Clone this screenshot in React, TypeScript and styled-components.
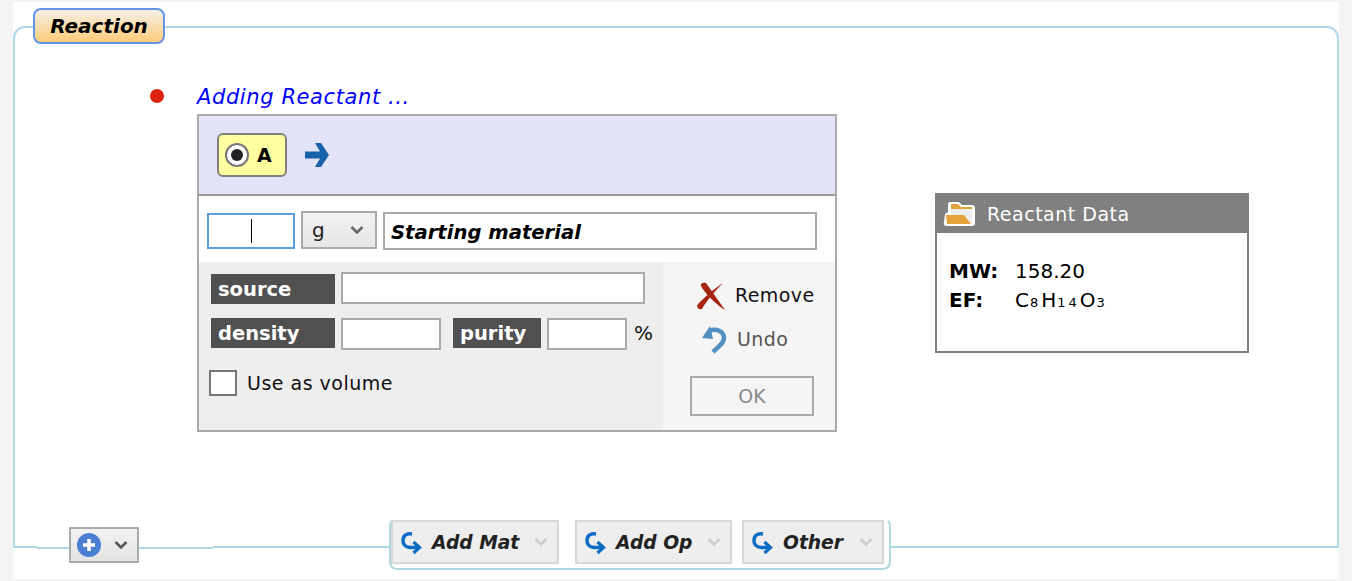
import React from 'react';
import styled, { createGlobalStyle } from 'styled-components';

const GlobalStyle = createGlobalStyle`
  html, body {
    margin: 0;
    height: 100%;
    overflow: hidden;
    background: #f4f4f4;
    font-family: "DejaVu Sans", Verdana, sans-serif;
  }
`;

const line = '#add8e6';

const Page = styled.div`
  box-sizing: border-box;
  width: 1326px;
  height: 577px;
  margin: 2px 0 0 13px;
  padding-top: 24px;
  background: #fff;
`;

const Frame = styled.section`
  position: relative;
  box-sizing: border-box;
  height: 522px;
  display: flex;
  flex-direction: column;
  border: 2px solid ${line};
  border-radius: 12px 12px 0 0;
`;

const Legend = styled.h2`
  box-sizing: border-box;
  width: 132px;
  height: 36px;
  margin: -20px 0 0 18px;
  display: flex;
  align-items: center;
  justify-content: center;
  border: 2px solid #6495ed;
  border-radius: 8px;
  background: linear-gradient(#f5f0e6, #ffcc7a);
  font-size: 20px;
  font-weight: bold;
  font-style: italic;
  color: #000;
`;

const Work = styled.div`
  display: flex;
  align-items: flex-start;
  margin-top: 40px;
`;

const Dot = styled.span`
  flex: none;
  width: 14px;
  height: 14px;
  margin: 5px 0 0 135px;
  border-radius: 50%;
  background: #dd2211;
`;

const Step = styled.div`
  margin-left: 33px;
`;

const StepTitle = styled.div`
  height: 30px;
  line-height: 26px;
  font-size: 21px;
  font-style: italic;
  letter-spacing: 0.6px;
  color: #0000ff;
`;

const Panel = styled.div`
  box-sizing: border-box;
  width: 640px;
  height: 318px;
  display: flex;
  flex-direction: column;
  border: 2px solid #aaa;
`;

const PanelHead = styled.div`
  box-sizing: border-box;
  height: 80px;
  display: flex;
  align-items: center;
  padding: 0 0 0 18px;
  background: #e4e4f8;
  border-bottom: 2px solid #999;
`;

const Choice = styled.div`
  box-sizing: border-box;
  width: 70px;
  height: 44px;
  display: flex;
  align-items: center;
  gap: 8px;
  padding-left: 6px;
  background: #ffffa0;
  border: 2px solid #808080;
  border-radius: 6px;
  font-size: 19px;
  font-weight: bold;
  color: #000;
`;

const Radio = styled.span`
  box-sizing: border-box;
  width: 24px;
  height: 24px;
  display: flex;
  align-items: center;
  justify-content: center;
  border: 2px solid #777;
  border-radius: 50%;
  background: #fff;
  &::after {
    content: '';
    width: 12px;
    height: 12px;
    border-radius: 50%;
    background: #222;
  }
`;

const NextArrow = styled.svg`
  width: 26px;
  height: 26px;
  margin-left: 17px;
`;

const AmountRow = styled.div`
  height: 66px;
  display: flex;
  align-items: flex-start;
  padding: 17px 0 0 8px;
  box-sizing: border-box;
  background: #fff;
`;

const Field = styled.div<{ $w: number; $h?: number; $color?: string; $mt?: number; $ml?: number }>`
  box-sizing: border-box;
  flex: none;
  width: ${p => p.$w}px;
  height: ${p => p.$h ?? 32}px;
  margin-top: ${p => p.$mt ?? 0}px;
  margin-left: ${p => p.$ml ?? 0}px;
  border: 2px solid ${p => p.$color ?? '#aaa'};
  background: #fff;
`;

const AmountField = styled(Field)`
  display: flex;
  align-items: center;
  justify-content: center;
`;

const Caret = styled.span`
  width: 1px;
  height: 24px;
  background: #000;
`;

const Select = styled.div`
  box-sizing: border-box;
  width: 76px;
  height: 38px;
  margin: -2px 0 0 6px;
  display: flex;
  align-items: center;
  justify-content: space-between;
  padding: 0 11px 0 9px;
  border: 2px solid #aaa;
  background: linear-gradient(#f2f2f2, #e6e6e6);
  font-size: 20px;
  color: #222;
`;

const NameField = styled(Field)`
  display: flex;
  align-items: center;
  padding: 3px 0 0 6px;
  font-size: 19.6px;
  font-weight: bold;
  font-style: italic;
  color: #000;
`;

const Lower = styled.div`
  flex: 1;
  display: flex;
`;

const Details = styled.div`
  box-sizing: border-box;
  width: 464px;
  padding: 10px 0 0 12px;
  background: #eee;
`;

const DetailRow = styled.div<{ $mt?: number }>`
  display: flex;
  align-items: flex-start;
  margin-top: ${p => p.$mt ?? 0}px;
`;

const Tag = styled.div<{ $w: number; $ml?: number; $mt?: number }>`
  box-sizing: border-box;
  flex: none;
  width: ${p => p.$w}px;
  height: 30px;
  margin-top: ${p => p.$mt ?? 0}px;
  margin-left: ${p => p.$ml ?? 0}px;
  padding-left: 7px;
  line-height: 31px;
  background: #505050;
  color: #fff;
  font-size: 19.5px;
  font-weight: bold;
`;

const Percent = styled.span`
  margin-left: 7px;
  line-height: 30px;
  font-size: 20px;
  color: #111;
`;

const VolumeRow = styled.label`
  display: flex;
  align-items: center;
  gap: 10px;
  margin: 20px 0 0 -2px;
  font-size: 19px;
  letter-spacing: 0.5px;
  color: #111;
`;

const Box = styled.span`
  box-sizing: border-box;
  width: 28px;
  height: 26px;
  border: 2px solid #777;
  background: #fff;
`;

const Actions = styled.div`
  flex: 1;
  display: flex;
  flex-direction: column;
  align-items: flex-start;
  box-sizing: border-box;
  padding: 18px 0 0 27px;
  background: #f5f5f5;
`;

const Action = styled.div<{ $muted?: boolean; $mt?: number }>`
  display: flex;
  align-items: center;
  height: 30px;
  margin-top: ${p => p.$mt ?? 0}px;
  font-size: 19px;
  letter-spacing: 0.4px;
  color: ${p => (p.$muted ? '#555' : '#111')};
`;

const ActionIcon = styled.svg<{ $ml: number; $w: number }>`
  flex: none;
  width: ${p => p.$w}px;
  height: 30px;
  margin: 0 10px 0 ${p => p.$ml}px;
`;

const OkButton = styled.div`
  box-sizing: border-box;
  width: 124px;
  height: 40px;
  margin-top: 22px;
  display: flex;
  align-items: center;
  justify-content: center;
  border: 2px solid #aaa;
  font-size: 19px;
  color: #888;
`;

const DataBox = styled.aside`
  box-sizing: border-box;
  width: 314px;
  height: 160px;
  margin: 109px 0 0 98px;
  border: 2px solid #808080;
  background: #fff;
`;

const DataHead = styled.div`
  height: 38px;
  display: flex;
  align-items: center;
  padding-left: 6px;
  background: #808080;
  color: #fff;
  font-size: 19px;
  letter-spacing: 0.5px;
`;

const DataIcon = styled.svg`
  width: 33px;
  height: 26px;
  margin-right: 11px;
`;

const DataGrid = styled.div`
  display: grid;
  grid-template-columns: 66px 1fr;
  grid-auto-rows: 29px;
  align-items: center;
  padding: 23px 0 0 12px;
  font-size: 20px;
  color: #000;
`;

const DataKey = styled.span`
  font-weight: bold;
`;

const Sub = styled.span`
  font-size: 13px;
  letter-spacing: 3px;
  margin-left: 1px;
`;

const Seam = styled.div`
  position: absolute;
  left: 22px;
  bottom: -3px;
  width: 176px;
  height: 2px;
  border-top: 1px solid #fff;
  background: ${line};
`;

const Footer = styled.div`
  position: relative;
  z-index: 1;
  margin-top: auto;
  margin-bottom: -24px;
  height: 52px;
  display: flex;
  align-items: flex-start;
`;

const AddButton = styled.div`
  box-sizing: border-box;
  width: 70px;
  height: 36px;
  margin: 9px 0 0 54px;
  display: flex;
  align-items: center;
  padding: 0 9px 0 6px;
  border: 2px solid #aaa;
  background: linear-gradient(#f2f2f2, #e4e4e4);
`;

const Toolbar = styled.div`
  box-sizing: border-box;
  height: 52px;
  margin-left: 250px;
  display: flex;
  align-items: flex-start;
  padding-right: 5px;
  background: #fff;
  border: 2px solid ${line};
  border-top-color: #fff;
  border-radius: 8px;
`;

const MenuButton = styled.div<{ $w: number; $ml?: number }>`
  box-sizing: border-box;
  width: ${p => p.$w}px;
  height: 44px;
  margin-left: ${p => p.$ml ?? 0}px;
  display: flex;
  align-items: center;
  padding: 0 9px 0 7px;
  border: 2px solid #d8d8d8;
  background: #eee;
  font-size: 18.7px;
  font-weight: bold;
  font-style: italic;
  color: #222;
`;

const MenuIcon = styled.svg`
  flex: none;
  width: 24px;
  height: 26px;
  margin-right: 8px;
`;

const ChevronIcon = styled.svg`
  flex: none;
  width: 14px;
  height: 14px;
  margin-left: auto;
`;

const Chevron = ({ color }: { color: string }) => (
  <ChevronIcon viewBox="0 0 14 14">
    <path d="M1.500 4 7 9.500 12.500 4" fill="none" stroke={color} strokeWidth="2.600" />
  </ChevronIcon>
);

const CurveArrow = () => (
  <MenuIcon viewBox="0 0 24 26">
    <path d="M12 5C6 4 3 7 3 11.500S6 18 10 18.500h8" fill="none" stroke="#0b6cc4" strokeWidth="3.400" />
    <path d="M13.500 13l6 5.500-6 5.500" fill="none" stroke="#0b6cc4" strokeWidth="3.200" />
  </MenuIcon>
);

const menus = [
  { label: 'Add Mat', w: 168, ml: 0 },
  { label: 'Add Op', w: 157, ml: 16 },
  { label: 'Other', w: 142, ml: 10 },
];

const App: React.FC = () => (
  <Page>
    <GlobalStyle />
    <Frame>
      <Legend>Reaction</Legend>
      <Work>
        <Dot />
        <Step>
          <StepTitle>Adding Reactant ...</StepTitle>
          <Panel>
            <PanelHead>
              <Choice>
                <Radio />
                A
              </Choice>
              <NextArrow viewBox="0 0 26 26">
                <path d="M11 1h6l8 12-8 12h-6l5-8.500H1V9.500h15z" fill="#1762a8" />
              </NextArrow>
            </PanelHead>
            <AmountRow>
              <AmountField $w={88} $h={36} $color="#5a9fe0">
                <Caret />
              </AmountField>
              <Select>
                g
                <Chevron color="#666" />
              </Select>
              <NameField $w={434} $h={38} $ml={6} $mt={-1}>Starting material</NameField>
            </AmountRow>
            <Lower>
              <Details>
                <DetailRow>
                  <Tag $w={124} $mt={2}>source</Tag>
                  <Field $w={304} $ml={6} />
                </DetailRow>
                <DetailRow $mt={14}>
                  <Tag $w={124}>density</Tag>
                  <Field $w={100} $ml={6} />
                  <Tag $w={88} $ml={12}>purity</Tag>
                  <Field $w={80} $ml={6} />
                  <Percent>%</Percent>
                </DetailRow>
                <VolumeRow>
                  <Box />
                  Use as volume
                </VolumeRow>
              </Details>
              <Actions>
                <Action>
                  <ActionIcon $ml={7} $w={28} viewBox="0 0 28 30">
                    <path d="M26 3C18 8 8 17 1 24c-2 3 0 6 4 5 5-9 14-19 21-26z" fill="#a52510" />
                    <path d="M4 6c-1-2 2-4 5-3 5 7 12 17 19 27C20 25 9 15 4 6z" fill="#a52510" />
                  </ActionIcon>
                  Remove
                </Action>
                <Action $muted $mt={14}>
                  <ActionIcon $ml={11} $w={26} viewBox="0 0 26 30">
                    <path d="M8 7c7-3 15 0 15 7 0 5-5 8-11 14" fill="none" stroke="#4f8fc0" strokeWidth="4.500" />
                    <path d="M1 14L9 2l3 13z" fill="#4f8fc0" />
                  </ActionIcon>
                  Undo
                </Action>
                <OkButton>OK</OkButton>
              </Actions>
            </Lower>
          </Panel>
        </Step>
        <DataBox>
          <DataHead>
            <DataIcon viewBox="0 0 33 26">
              <path d="M7 1h9l3 3h10c2 0 3 1 3 3v15c0 2-1 3-3 3H4c-2 0-4-1-3-4l1-8 3-2V3c0-1 1-2 2-2z" fill="#fff" />
              <path d="M8 3h7l3 3h11v3H8z" fill="#e5a23a" />
              <path d="M8 8h21v14H8z" fill="#eee" />
              <path d="M3 14h18l7 9H4z" fill="#e5a23a" />
            </DataIcon>
            Reactant Data
          </DataHead>
          <DataGrid>
            <DataKey>MW:</DataKey>
            <span>158.20</span>
            <DataKey>EF:</DataKey>
            <span>C<Sub>8</Sub>H<Sub>14</Sub>O<Sub>3</Sub></span>
          </DataGrid>
        </DataBox>
      </Work>
      <Footer>
        <AddButton>
          <svg width="24" height="24" viewBox="0 0 24 24">
            <circle cx="12" cy="12" r="12" fill="#4a7fd4" />
            <path d="M12 6v12M6 12h12" stroke="#fff" strokeWidth="3.500" />
          </svg>
          <Chevron color="#555" />
        </AddButton>
        <Toolbar>
          {menus.map(m => (
            <MenuButton key={m.label} $w={m.w} $ml={m.ml}>
              <CurveArrow />
              {m.label}
              <Chevron color="#ccc" />
            </MenuButton>
          ))}
        </Toolbar>
      </Footer>
      <Seam />
    </Frame>
  </Page>
);

export default App;
